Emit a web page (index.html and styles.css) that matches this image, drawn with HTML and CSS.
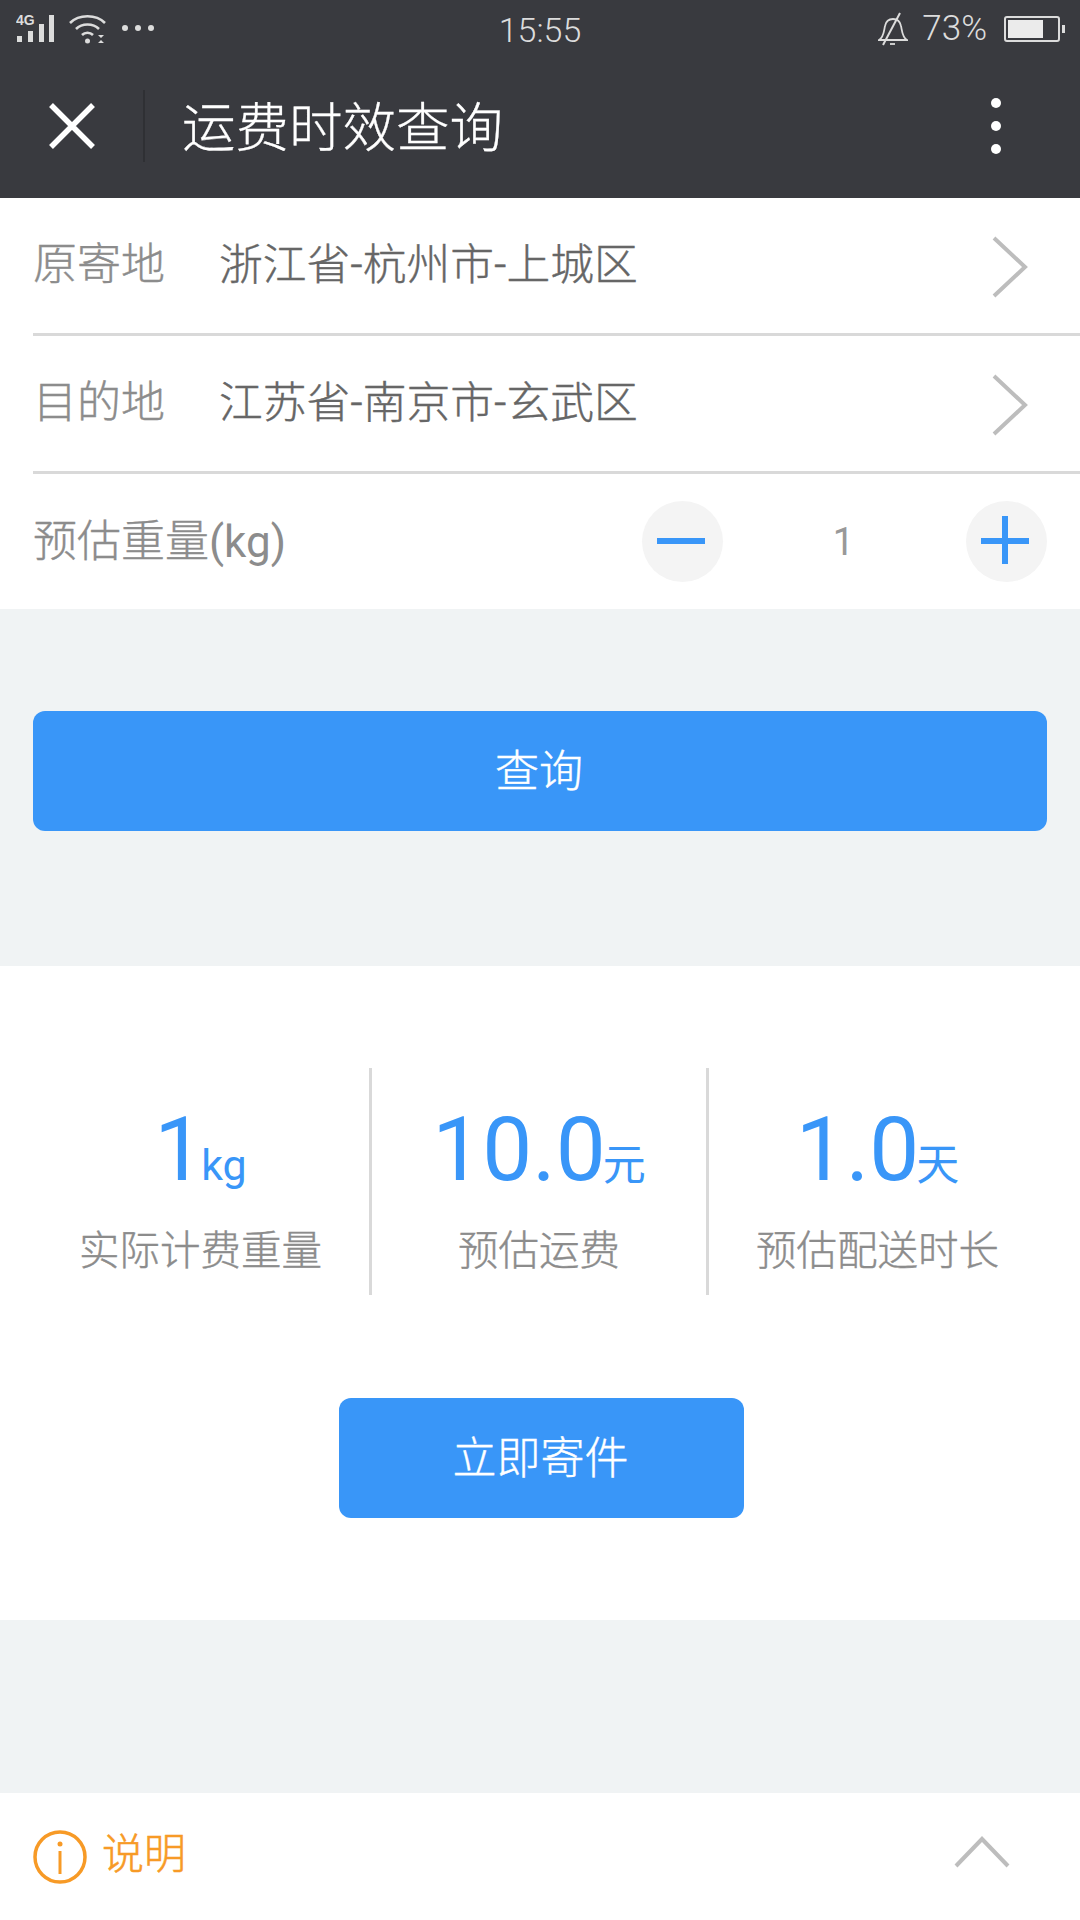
FILE: index.html
```html
<!DOCTYPE html>
<html lang="zh-CN">
<head>
    <meta charset="UTF-8">
    <meta name="viewport" content="width=device-width, initial-scale=1.0">
    <title>运费时效查询</title>
    <link rel="stylesheet" href="styles.css">
</head>
<body>
    <div class="status-bar">
        <div class="status-left">
            <svg class="icon-signal" width="40" height="34" viewBox="0 -3 40 34">
                <text x="0" y="10" class="signal-text">4G</text>
                <rect x="1" y="21" width="5" height="6" fill="#dcdcdc"/>
                <rect x="12" y="16" width="5" height="11" fill="#dcdcdc"/>
                <rect x="23" y="9" width="5" height="18" fill="#dcdcdc"/>
                <rect x="33" y="0" width="5" height="27" fill="#dcdcdc"/>
            </svg>
            <svg class="icon-wifi" width="38" height="32" viewBox="0 0 38 32" fill="none" stroke="#dcdcdc" stroke-width="2.6">
                <path d="M1 10 C10 1 27 1 36 10"/>
                <path d="M7 16 C13 10 24 10 30 16"/>
                <path d="M13 22 C16 19 21 19 24 22"/>
                <circle cx="18.500" cy="28" r="2.500" fill="#dcdcdc" stroke="none"/>
                <path d="M29 22 L35 22 L32 25 Z M29 30 L35 30 L32 27 Z" fill="#dcdcdc" stroke="none"/>
            </svg>
            <div class="status-dots"><span></span><span></span><span></span></div>
        </div>
        <div class="status-time">15:55</div>
        <div class="status-right">
            <svg width="30" height="34" viewBox="0 0 30 34" fill="none" stroke="#dcdcdc" stroke-width="1.800">
                <path d="M1 28 C6 25 6 18 7 14 C8 9 11 7 15 7 C19 7 22 9 23 14 C24 18 24 25 29 28 Z"/>
                <path d="M5 33 L22 1" stroke-width="2"/>
                <path d="M12 32 H17"/>
            </svg>
            <span class="status-battery-text">73%</span>
            <div class="battery">
                <div class="battery-body"><div class="battery-fill"></div></div>
                <div class="battery-tip"></div>
            </div>
        </div>
    </div>

    <div class="nav-bar">
        <svg class="nav-close" width="46" height="46" viewBox="0 0 46 46" fill="none" stroke="#fff" stroke-width="5.500">
            <path d="M2 2 L44 44 M44 2 L2 44"/>
        </svg>
        <div class="nav-divider"></div>
        <div class="nav-title">运费时效查询</div>
        <div class="nav-more"><span></span><span></span><span></span></div>
    </div>

    <div class="form">
        <div class="form-row form-row-line">
            <div class="form-label">原寄地</div>
            <div class="form-value">浙江省-杭州市-上城区</div>
            <svg class="arrow" width="36" height="62" viewBox="0 0 36 62" fill="none" stroke="#bdbdbd" stroke-width="4">
                <path d="M2 2 L33 31 L2 60"/>
            </svg>
        </div>
        <div class="form-row form-row-line">
            <div class="form-label">目的地</div>
            <div class="form-value">江苏省-南京市-玄武区</div>
            <svg class="arrow" width="36" height="62" viewBox="0 0 36 62" fill="none" stroke="#bdbdbd" stroke-width="4">
                <path d="M2 2 L33 31 L2 60"/>
            </svg>
        </div>
        <div class="form-row form-row-weight">
            <div class="form-label form-label-wide">预估重量<span class="latin">(kg)</span></div>
            <div class="stepper">
                <div class="stepper-btn"><span class="bar-h"></span></div>
                <div class="stepper-num">1</div>
                <div class="stepper-btn"><span class="bar-h"></span><span class="bar-v"></span></div>
            </div>
        </div>
    </div>

    <div class="query-section">
        <button class="btn btn-query">查询</button>
    </div>

    <div class="result">
        <div class="stats">
            <div class="stat">
                <div class="stat-value">1<span class="stat-unit">kg</span></div>
                <div class="stat-label">实际计费重量</div>
            </div>
            <div class="stat stat-line">
                <div class="stat-value">10.0<span class="stat-unit">元</span></div>
                <div class="stat-label">预估运费</div>
            </div>
            <div class="stat stat-line">
                <div class="stat-value">1.0<span class="stat-unit">天</span></div>
                <div class="stat-label">预估配送时长</div>
            </div>
        </div>
        <button class="btn btn-send">立即寄件</button>
    </div>

    <div class="spacer"></div>

    <div class="footer">
        <svg class="info-icon" width="54" height="54" viewBox="0 0 54 54" fill="none" stroke="#f79a26">
            <circle cx="27" cy="27" r="25" stroke-width="3.500"/>
            <circle cx="27" cy="14" r="2.500" fill="#f79a26" stroke="none"/>
            <path d="M27 21 V44" stroke-width="3"/>
        </svg>
        <div class="footer-text">说明</div>
        <svg class="arrow-up" width="56" height="32" viewBox="0 0 56 32" fill="none" stroke="#bdbdbd" stroke-width="4">
            <path d="M2 30 L28 3 L54 30"/>
        </svg>
    </div>
</body>
</html>
```

FILE: styles.css
```css
* {
    box-sizing: border-box;
}
body {
    margin: 0;
    width: 1080px;
    height: 1920px;
    display: flex;
    flex-direction: column;
    font-family: 'Roboto', 'Noto Sans CJK SC', sans-serif;
    background-color: #f0f3f4;
    color: #8c8c8c;
    overflow: hidden;
}

/* status bar */
.status-bar {
    height: 58px;
    background-color: #393a3f;
    display: flex;
    align-items: center;
    justify-content: space-between;
    padding: 0 15px 0 16px;
    position: relative;
    color: #dcdcdc;
}
.status-left, .status-right {
    display: flex;
    align-items: center;
}
.signal-text {
    font-family: 'Liberation Sans', sans-serif;
    font-size: 14px;
    font-weight: bold;
    fill: #dcdcdc;
}
.icon-wifi {
    margin-left: 13px;
}
.status-dots {
    display: flex;
    gap: 7px;
    margin-left: 15px;
    margin-bottom: 3px;
}
.status-dots span {
    width: 6px;
    height: 6px;
    border-radius: 50%;
    background-color: #dcdcdc;
}
.status-time {
    position: absolute;
    left: 0;
    right: 0;
    top: 10px;
    text-align: center;
    font-size: 34px;
    line-height: 40px;
    font-weight: 300;
}
.status-battery-text {
    font-size: 35px;
    line-height: 40px;
    font-weight: 300;
    margin: 0 17px 0 14px;
}
.battery {
    display: flex;
    align-items: center;
}
.battery-body {
    width: 56px;
    height: 26px;
    border: 2px solid #dcdcdc;
    border-radius: 3px;
    padding: 2px;
}
.battery-fill {
    width: 72%;
    height: 100%;
    background-color: #ebebeb;
}
.battery-tip {
    width: 3px;
    height: 8px;
    margin-left: 2px;
    background-color: #dcdcdc;
}

/* nav bar */
.nav-bar {
    height: 140px;
    background-color: #393a3f;
    display: flex;
    align-items: center;
    padding: 0 0 4px 49px;
    color: #fff;
}
.nav-divider {
    width: 2px;
    height: 72px;
    margin-left: 48px;
    background-color: #2f3034;
}
.nav-title {
    font-family: 'Noto Sans CJK SC', sans-serif;
    font-size: 53.500px;
    font-weight: 300;
    -webkit-text-stroke: 0.3px #fff;
    margin: 0 0 5px 37px;
    flex: 1;
}
.nav-more {
    display: flex;
    flex-direction: column;
    gap: 13px;
    margin-right: 79px;
}
.nav-more span {
    width: 10px;
    height: 10px;
    border-radius: 50%;
    background-color: #fff;
}

/* form */
.form {
    background-color: #fff;
}
.form-row {
    margin-left: 33px;
    display: flex;
    align-items: center;
    height: 138px;
    padding-bottom: 10px;
}
.form-row-line {
    border-bottom: 3px solid #d9d9d9;
}
.form-row-weight {
    height: 135px;
    padding: 0 33px 0 0;
    justify-content: space-between;
}
.form-label {
    width: 187px;
    font-size: 44px;
    font-weight: 300;
    -webkit-text-stroke: 0.4px #8c8c8c;
    color: #8c8c8c;
    font-family: 'Noto Sans CJK SC', sans-serif;
}
.form-label-wide {
    width: auto;
    margin-bottom: 8px;
    font-family: 'Roboto', 'Noto Sans CJK SC', sans-serif;
}
.latin {
    font-weight: 400;
    -webkit-text-stroke: 0 transparent;
}
.form-value {
    flex: 1;
    margin-left: -1px;
    font-size: 43.750px;
    font-weight: 300;
    -webkit-text-stroke: 0.4px #666;
    color: #666;
    font-family: 'Roboto', 'Noto Sans CJK SC', sans-serif;
}
.arrow {
    margin: 13px 52px 0 0;
}
.stepper {
    display: flex;
    align-items: center;
}
.stepper-btn {
    width: 81px;
    height: 81px;
    border-radius: 50%;
    background-color: #f4f4f4;
    position: relative;
}
.bar-h {
    position: absolute;
    left: 15px;
    top: 37px;
    width: 48px;
    height: 6px;
    background-color: #3996f8;
}
.bar-v {
    position: absolute;
    left: 36px;
    top: 15px;
    width: 6px;
    height: 48px;
    background-color: #3996f8;
}
.stepper-num {
    width: 241px;
    margin-right: 2px;
    text-align: center;
    font-size: 38px;
    color: #999;
}

/* buttons */
.btn {
    display: block;
    height: 120px;
    border: none;
    border-radius: 12px;
    background-color: #3996f8;
    color: #fff;
    font-family: 'Noto Sans CJK SC', sans-serif;
    font-size: 44px;
    font-weight: 300;
    -webkit-text-stroke: 0.4px #fff;
    padding: 0 2px 6px 0;
}
.query-section {
    height: 357px;
    padding: 102px 33px 0;
}
.btn-query {
    width: 100%;
}

/* result */
.result {
    height: 654px;
    background-color: #fff;
    padding-top: 102px;
}
.stats {
    display: flex;
    height: 227px;
}
.stat {
    width: 369px;
    padding: 32px 0 0 32px;
    text-align: center;
}
.stat + .stat {
    width: 337px;
    padding: 32px 0 0;
}
.stat + .stat + .stat {
    width: 374px;
    padding: 32px 34px 0 0;
}
.stat-line {
    border-left: 3px solid #d9d9d9;
}
.stat-value {
    font-size: 89px;
    line-height: 100px;
    color: #3996f8;
}
.stat-unit {
    font-size: 43px;
    margin-left: -3px;
    font-family: 'Roboto', 'Noto Sans CJK SC', sans-serif;
}
.stat-label {
    margin-top: 5px;
    font-size: 40.500px;
    line-height: 56px;
    font-weight: 300;
    -webkit-text-stroke: 0.4px #8c8c8c;
    color: #8c8c8c;
    font-family: 'Noto Sans CJK SC', sans-serif;
}
.btn-send {
    width: 405px;
    margin: 103px 0 0 339px;
}

.spacer {
    flex: 1;
}

/* footer */
.footer {
    height: 127px;
    background-color: #fff;
    display: flex;
    align-items: center;
    padding: 0 70px 0 33px;
}
.info-icon {
    margin-right: 15px;
}
.footer-text {
    flex: 1;
    margin-bottom: 12px;
    font-family: 'Noto Sans CJK SC', sans-serif;
    font-size: 42px;
    font-weight: 300;
    -webkit-text-stroke: 0.5px #f79a26;
    color: #f79a26;
}
.arrow-up {
    margin-bottom: 10px;
}
```
